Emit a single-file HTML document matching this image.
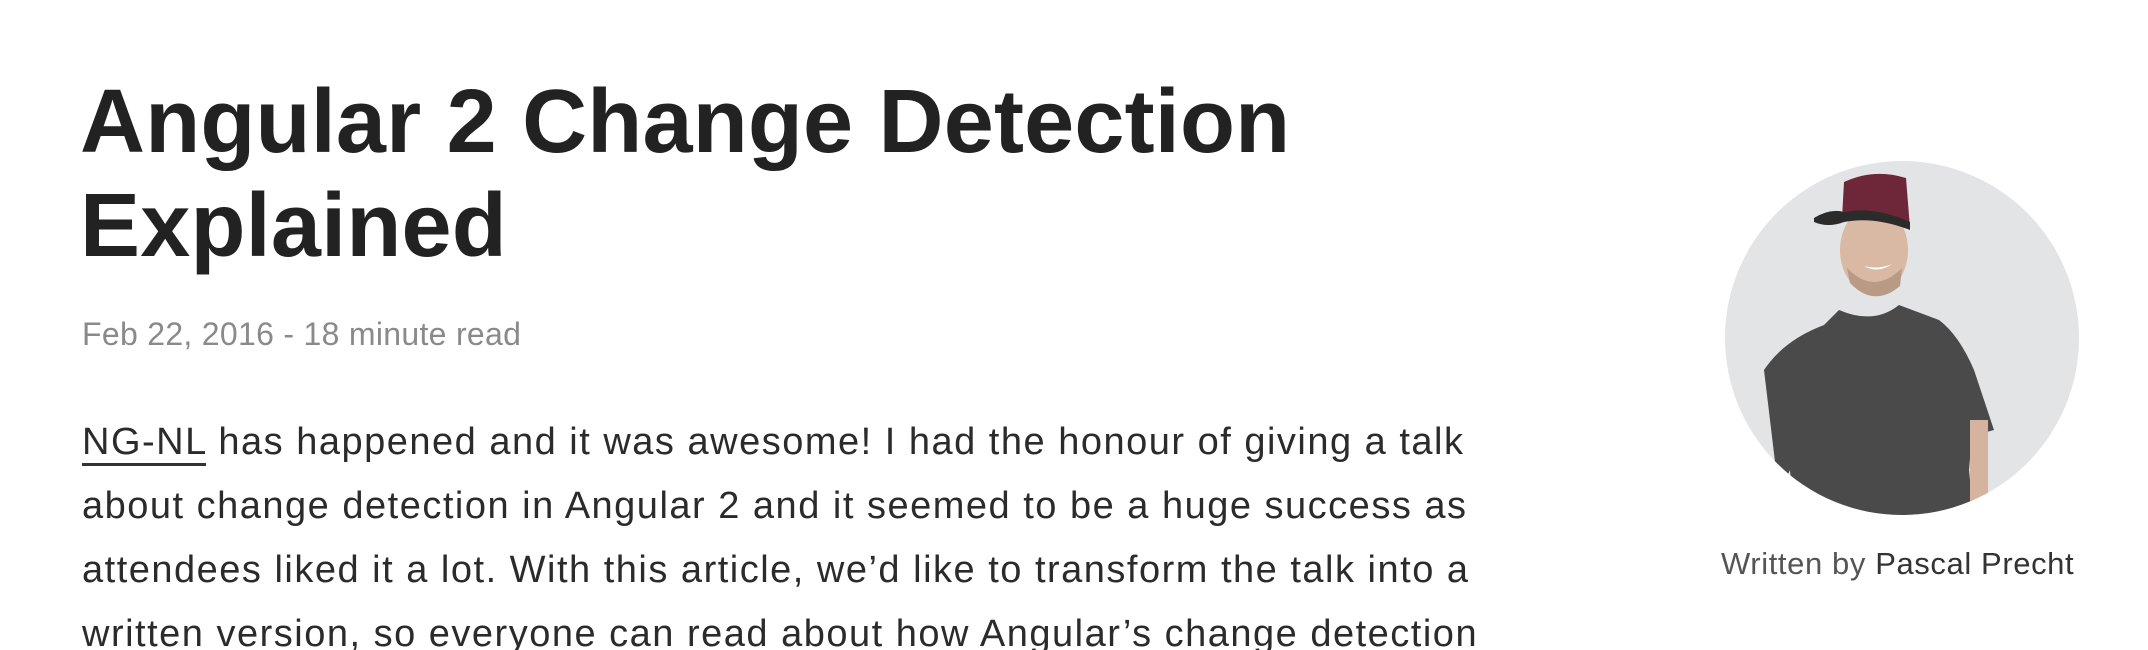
<!DOCTYPE html>
<html><head><meta charset="utf-8"><style>
html,body{margin:0;padding:0;background:#fff;width:2148px;height:650px;overflow:hidden}
body{font-family:"Liberation Sans",sans-serif;position:relative}
h1{position:absolute;left:80px;top:70px;margin:0;font-size:90px;line-height:104px;font-weight:bold;color:#222;letter-spacing:0.2px;width:1500px}
.meta{position:absolute;left:82px;top:316px;font-size:32px;color:#8a8a8a;letter-spacing:0.3px}
.p{position:absolute;left:82px;top:410px;width:1480px;font-size:38px;line-height:64px;color:#2b2b2b;letter-spacing:1.5px;white-space:nowrap}
.p a{color:#2b2b2b;text-decoration:none;border-bottom:3px solid #333}
.cap{position:absolute;left:1721px;top:546px;font-size:31px;color:#555;letter-spacing:0.6px;white-space:nowrap}
.cap b{font-weight:normal;color:#333}
svg{position:absolute;left:1724px;top:160px}
</style></head><body>
<h1>Angular 2 Change Detection<br>Explained</h1>
<div class="meta">Feb 22, 2016 - 18 minute read</div>
<div class="p"><a>NG-NL</a> has happened and it was awesome! I had the honour of giving a talk<br>about change detection in Angular 2 and it seemed to be a huge success as<br>attendees liked it a lot. With this article, we’d like to transform the talk into a<br>written version, so everyone can read about how Angular’s change detection</div>
<svg width="356" height="356" viewBox="0 0 356 356">
<defs><clipPath id="c"><circle cx="178" cy="178" r="177"/></clipPath></defs>
<g clip-path="url(#c)">
<rect width="356" height="356" fill="#e3e4e6"/>
<path d="M40 210 Q60 180 100 165 L115 150 Q150 165 175 145 L215 160 Q235 175 250 210 L270 270 L248 276 L245 310 L250 360 L70 360 L66 310 L55 335 Z" fill="#4a4a4a"/>
<rect x="246" y="260" width="18" height="90" fill="#d6b39e"/>
<ellipse cx="150" cy="90" rx="34" ry="44" fill="#d9b8a4"/>
<path d="M123 108 Q150 136 178 108 L176 126 Q150 148 126 123Z" fill="#b89a85"/>
<path d="M140 106 Q154 114 168 104 Q154 110 140 106Z" fill="#fff"/>
<path d="M118 58 L120 22 Q150 8 182 18 L186 68 Q150 52 118 58Z" fill="#6e2738"/>
<path d="M90 58 Q106 48 120 52 Q150 46 186 62 L186 70 Q150 56 120 62 Q104 68 90 62Z" fill="#2b2b2b"/>
</g></svg>
<div class="cap">Written by <b>Pascal Precht</b></div>
</body></html>
